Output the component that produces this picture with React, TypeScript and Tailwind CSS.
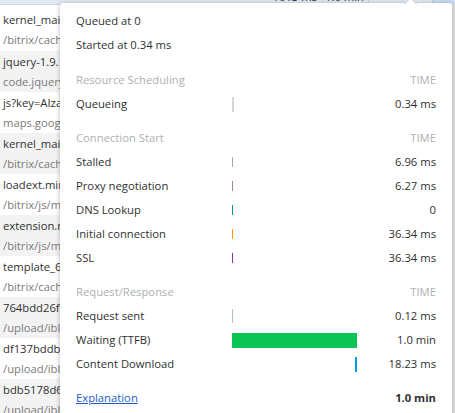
const requests: [string, string][] = [
  ["kernel_main.js?1588", "/bitrix/cache/js/s1/main"],
  ["jquery-1.9.1.min.js", "code.jquery.com/jquery"],
  ["js?key=AIzaSyB7x", "maps.googleapis.com/maps"],
  ["kernel_main_polyfill.js", "/bitrix/cache/js/s1/main"],
  ["loadext.min.js?1588", "/bitrix/js/main/loadext"],
  ["extension.min.js?158", "/bitrix/js/main/loadext"],
  ["template_6e2a1f.js", "/bitrix/cache/js/s1/main"],
  ["764bdd26f1c0a.jpg", "/upload/iblock/764/"],
  ["df137bddb9e12.jpg", "/upload/iblock/df1/"],
  ["bdb5178d6aa07.jpg", "/upload/iblock/bdb/"],
];

type Timing = {
  label: string;
  value: string;
  bar?: "thin" | "full" | "end";
  color?: string;
  size?: string;
};

const sections: { title: string; rows: Timing[] }[] = [
  {
    title: "Resource Scheduling",
    rows: [{ label: "Queueing", value: "0.34 ms", bar: "thin", color: "bg-[#d6d6d6]", size: "w-[2px] h-[15px]" }],
  },
  {
    title: "Connection Start",
    rows: [
      { label: "Stalled", value: "6.96 ms", bar: "thin", color: "bg-[#a8a8a8]", size: "w-px h-[10px]" },
      { label: "Proxy negotiation", value: "6.27 ms", bar: "thin", color: "bg-[#a1887f]", size: "w-px h-[10px]" },
      { label: "DNS Lookup", value: "0", bar: "thin", color: "bg-[#009688]", size: "w-px h-[10px]" },
      { label: "Initial connection", value: "36.34 ms", bar: "thin", color: "bg-[#ff9800]", size: "w-px h-[10px]" },
      { label: "SSL", value: "36.34 ms", bar: "thin", color: "bg-[#9c27b0]", size: "w-px h-[10px]" },
    ],
  },
  {
    title: "Request/Response",
    rows: [
      { label: "Request sent", value: "0.12 ms", bar: "thin", color: "bg-[#b0bec5]", size: "w-px h-[14px]" },
      { label: "Waiting (TTFB)", value: "1.0 min", bar: "full", color: "bg-[#0ac553]", size: "w-full h-[15px]" },
      { label: "Content Download", value: "18.23 ms", bar: "end", color: "bg-[#039be5]", size: "w-[2px] h-[15px]" },
    ],
  },
];

const TimingRow = ({ label, value, bar, color, size }: Timing) => (
  <div className="grid h-[24px] grid-cols-[156px_125px_1fr] items-center">
    <span>{label}</span>
    <div className={`flex h-full items-center ${bar === "end" ? "justify-end" : "justify-start"}`}>
      <span className={`${color} ${size}`}></span>
    </div>
    <span className="text-right">{value}</span>
  </div>
);

export default function App() {
  return (
    <div className="relative h-[413px] w-[455px] overflow-hidden bg-white font-['Open_Sans',sans-serif] text-[11.25px] text-[#303030]">
      {/* column header, mostly scrolled out of view */}
      <div className="flex h-[5px] items-end overflow-hidden border-b border-[#cfd8e3] bg-[#dfe8f3] text-[#333]">
        <div className="flex h-full w-[323px] items-end justify-end border-r border-[#c3ccd8] pr-[5px] leading-[14px]">1013 ms</div>
        <div className="flex h-full w-[46px] items-end justify-end border-r border-[#c3ccd8] pr-[4px] leading-[14px]">1.0 min</div>
        <div className="h-full w-[64px] border-r border-[#c3ccd8]"></div>
        <div className="h-full flex-1 bg-[#c9d9ee]"></div>
      </div>

      <div className="flex">
        <div className="flex-1">
          {requests.map(([name, path], i) => (
            <div
              key={i}
              className={`flex ${i === 0 ? "h-[46px] pt-[3px]" : "h-[41px]"} ${i % 2 === 1 ? "bg-[#f3f3f3]" : "bg-white"}`}
            >
              <div className="flex w-[60px] flex-col justify-center overflow-hidden pl-[3px]">
                <span className="whitespace-nowrap leading-[20px] text-[#303030]">{name}</span>
                <span className="whitespace-nowrap leading-[20px] text-[#7a7a7a]">{path}</span>
              </div>
            </div>
          ))}
        </div>
        <div className="w-[3px] bg-[#e3e3e3]"></div>
      </div>

      {/* timing popover */}
      <div className="absolute left-[60px] top-[3px] bottom-[-10px] w-[392px] rounded-[3px] bg-white px-4 pt-[6px] shadow-[0_1px_5px_rgba(0,0,0,0.3)]">
        <span className="absolute -top-[4px] left-[346px] h-[9px] w-[9px] rotate-45 border-l border-t border-[#d0d0d0] bg-white"></span>
        <div className="flex h-[24px] items-center">Queued at 0</div>
        <div className="flex h-[24px] items-center">Started at 0.34 ms</div>

        {sections.map((s, i) => (
          <div key={s.title} className={i === 0 ? "mt-[11px]" : "mt-[10px]"}>
            <div className="grid h-[24px] grid-cols-[281px_1fr] items-center text-[#b0b0b0]">
              <span>{s.title}</span>
              <span className="text-right">TIME</span>
            </div>
            {s.rows.map((r) => (
              <TimingRow key={r.label} {...r} />
            ))}
          </div>
        ))}

        <div className="mt-[10px] flex h-[24px] items-center justify-between">
          <a href="#" className="text-[#1a5cc8] underline">
            Explanation
          </a>
          <span className="font-bold">1.0 min</span>
        </div>
      </div>
    </div>
  );
}
